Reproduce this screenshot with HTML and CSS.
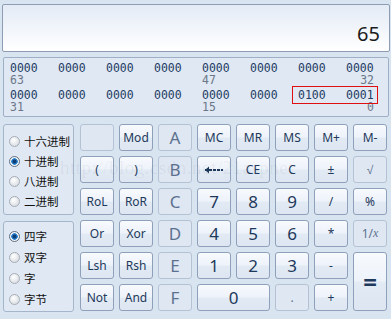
FILE: index.html
```html
<!DOCTYPE html>
<html lang="zh">
<head>
  <meta charset="UTF-8" />
  <title>计算器</title>
  <link rel="stylesheet" href="styles.css">
</head>
<body>
  <div class="calc">
    <div class="display">65</div>

    <div class="bits">
      <div class="row nums">
        <span>0000</span><span>0000</span><span>0000</span><span>0000</span>
        <span>0000</span><span>0000</span><span>0000</span><span>0000</span>
      </div>
      <div class="row labels">
        <span>63</span><span></span><span></span><span></span>
        <span>47</span><span></span><span></span><span class="r">32</span>
      </div>
      <div class="row nums second">
        <span>0000</span><span>0000</span><span>0000</span><span>0000</span>
        <span>0000</span><span>0000</span><span>0100</span><span>0001</span>
      </div>
      <div class="row labels">
        <span>31</span><span></span><span></span><span></span>
        <span>15</span><span></span><span></span><span class="r">0</span>
      </div>
      <div class="mark"></div>
    </div>

    <div class="keys">
      <div class="modes">
        <div class="group">
          <label class="radio"><i></i>十六进制</label>
          <label class="radio on"><i></i>十进制</label>
          <label class="radio"><i></i>八进制</label>
          <label class="radio"><i></i>二进制</label>
        </div>
        <div class="group words">
          <label class="radio on"><i></i>四字</label>
          <label class="radio"><i></i>双字</label>
          <label class="radio"><i></i>字</label>
          <label class="radio"><i></i>字节</label>
        </div>
      </div>

      <div class="grid">
        <button class="off"></button>
        <button class="sm">Mod</button>
        <button class="off big">A</button>
        <button class="sm">MC</button>
        <button class="sm">MR</button>
        <button class="sm">MS</button>
        <button class="sm">M+</button>
        <button class="sm">M-</button>

        <button class="sm">(</button>
        <button class="sm">)</button>
        <button class="off big">B</button>
        <button>
          <svg width="20" height="10" viewBox="0 0 20 10"><path d="M1 5h18" stroke="#1e395b" stroke-width="2" stroke-dasharray="3 1"/><path d="M1 5l4-3.5v7z" fill="#1e395b"/></svg>
        </button>
        <button class="sm">CE</button>
        <button class="sm">C</button>
        <button class="sm">±</button>
        <button class="off sm">√</button>

        <button class="sm">RoL</button>
        <button class="sm">RoR</button>
        <button class="off big">C</button>
        <button class="big">7</button>
        <button class="big">8</button>
        <button class="big">9</button>
        <button class="sm">/</button>
        <button class="sm">%</button>

        <button class="sm">Or</button>
        <button class="sm">Xor</button>
        <button class="off big">D</button>
        <button class="big">4</button>
        <button class="big">5</button>
        <button class="big">6</button>
        <button class="sm">*</button>
        <button class="off sm recip">1/<em>x</em></button>

        <button class="sm">Lsh</button>
        <button class="sm">Rsh</button>
        <button class="off big">E</button>
        <button class="big">1</button>
        <button class="big">2</button>
        <button class="big">3</button>
        <button class="sm">-</button>
        <button class="equals">=</button>

        <button class="sm">Not</button>
        <button class="sm">And</button>
        <button class="off big">F</button>
        <button class="big zero">0</button>
        <button class="off sm">.</button>
        <button class="sm">+</button>
      </div>
    </div>

    <div class="watermark">http://blog.csdn.net/21aspnet</div>
  </div>
</body>
</html>
```

FILE: styles.css
```css
body {
  margin: 0;
  background: #d9e4f1;
  font-family: "Noto Sans", "Noto Sans CJK SC", sans-serif;
}

.calc {
  position: relative;
  padding: 4px 1px 0 2px;
}

.display {
  height: 48px;
  border: 1px solid #8e9db3;
  border-radius: 2px;
  background: linear-gradient(#e3ebf6, #ffffff);
  text-align: right;
  font-size: 20px;
  line-height: 20px;
  padding: 19px 9px 0 0;
  box-sizing: border-box;
  color: #1b1b1b;
}

.bits {
  position: relative;
  margin: 5px 1px 0 1px;
  height: 60px;
  border: 1px solid #9fb0c6;
  border-radius: 2px;
  background: #dfe8f3;
  box-sizing: border-box;
  padding: 4px 0 0 6px;
  font-family: "DejaVu Sans Mono", monospace;
}

.row {
  display: grid;
  grid-template-columns: repeat(8, 48px);
}

.nums {
  font-size: 11.5px;
  line-height: 12px;
  color: #233c63;
}

.nums.second {
  margin-top: 3px;
}

.labels {
  font-size: 11.5px;
  line-height: 12px;
  color: #6b7788;
}

.labels .r {
  text-align: right;
  width: 28px;
}

.mark {
  position: absolute;
  left: 288px;
  top: 28px;
  width: 84px;
  height: 16px;
  border: 1px solid #e01010;
}

.keys {
  display: flex;
  gap: 6px;
  margin-top: 7px;
  padding-left: 1px;
}

.modes {
  display: flex;
  flex-direction: column;
  gap: 6px;
  width: 71px;
}

.group {
  height: 91px;
  border: 1px solid #a5b5ca;
  border-radius: 3px;
  background: #e0e8f3;
  box-sizing: border-box;
  padding: 9px 0 0 5px;
  display: flex;
  flex-direction: column;
  gap: 6px;
}

.group.words {
  padding-top: 7px;
  gap: 7px;
}

.radio {
  display: flex;
  align-items: center;
  gap: 4px;
  height: 14px;
  font-size: 11.5px;
  white-space: nowrap;
  color: #111;
}

.radio i {
  flex: none;
  width: 11px;
  height: 11px;
  border-radius: 50%;
  border: 1px solid #a7adb5;
  background: radial-gradient(circle at 40% 35%, #ffffff, #d0d5db);
  box-sizing: border-box;
}

.radio.on i {
  border-color: #5d6d80;
  background: radial-gradient(circle, #0f3e74 0 1.5px, #2a85d4 2.5px 3px, #f4f6f8 3.5px);
}

.grid {
  display: grid;
  grid-template-columns: repeat(8, 34px);
  grid-auto-rows: 27px;
  gap: 5px;
}

button {
  margin: 0;
  padding: 0;
  border: 1px solid #8fa1ba;
  border-radius: 3px;
  background: linear-gradient(#f7fafe 0%, #eef3fa 48%, #e2eaf4 52%, #dde6f1 100%);
  color: #1e395b;
  font-family: "Noto Sans", sans-serif;
  font-size: 12px;
  display: flex;
  align-items: center;
  justify-content: center;
}

button.big {
  font-size: 17px;
}

button.off {
  border-color: #b4c2d4;
  background: #dfe7f2;
  color: #5c7190;
}

button.recip em {
  font-family: "Liberation Serif", serif;
}

button.equals {
  grid-row: span 2;
  font-size: 24px;
  font-weight: bold;
}

button.zero {
  grid-column: span 2;
}

.watermark {
  position: absolute;
  left: 60px;
  top: 157px;
  font-family: "Liberation Serif", serif;
  font-size: 19px;
  letter-spacing: 0.5px;
  color: rgba(60, 70, 90, 0.07);
  pointer-events: none;
}
```
